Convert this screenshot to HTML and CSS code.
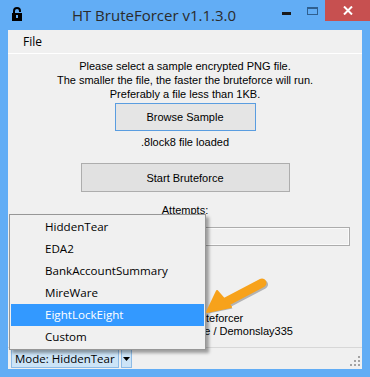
FILE: index.html
```html
<!DOCTYPE html>
<html lang="en">
<head>
    <meta charset="UTF-8">
    <title>HT BruteForcer v1.1.3.0</title>
    <link rel="stylesheet" href="styles.css">
</head>
<body>
    <div class="window">
        <header class="titlebar">
            <svg class="lock" width="10" height="14" viewBox="0 0 10 14">
                <path d="M2 7V4a3 3 0 0 1 6 0v1" fill="none" stroke="#000" stroke-width="2"/>
                <rect x="0" y="6" width="10" height="8" fill="#000"/>
                <rect x="4" y="8" width="2" height="3" fill="#62adf5"/>
            </svg>
            <div class="title">HT BruteForcer v1.1.3.0</div>
            <div class="controls">
                <span class="btn-min"></span>
                <span class="btn-max"></span>
                <span class="btn-close">
                    <svg width="10" height="9" viewBox="0 0 10 9">
                        <path d="M1 0.5L9 8.5M9 0.5L1 8.5" stroke="#fff" stroke-width="2"/>
                    </svg>
                </span>
            </div>
        </header>

        <div class="client">
            <nav class="menubar">
                <span class="menu-item">File</span>
            </nav>

            <main class="content">
                <p class="intro">
                    Please select a sample encrypted PNG file.<br>
                    The smaller the file, the faster the bruteforce will run.<br>
                    Preferably a file less than 1KB.
                </p>
                <button class="button browse">Browse Sample</button>
                <p class="status-text">.8lock8 file loaded</p>
                <button class="button start">Start Bruteforce</button>
                <p class="attempts">Attempts:</p>
                <div class="textbox"></div>

                <p class="about">
                    Hidden Tear Bruteforcer<br>
                    Coded by Michael Gillespie / Demonslay335
                </p>
            </main>

            <footer class="statusbar">
                <span class="mode">Mode: HiddenTear</span>
                <span class="mode-arrow">
                    <svg width="7" height="4" viewBox="0 0 7 4"><path d="M0 0h7L3.5 4z" fill="#000"/></svg>
                </span>
                <span class="grip">
                    <i style="grid-area: 1 / 3"></i>
                    <i style="grid-area: 2 / 2"></i><i style="grid-area: 2 / 3"></i>
                    <i style="grid-area: 3 / 1"></i><i style="grid-area: 3 / 2"></i><i style="grid-area: 3 / 3"></i>
                </span>
            </footer>

            <ul class="dropdown">
                <li>HiddenTear</li>
                <li>EDA2</li>
                <li>BankAccountSummary</li>
                <li>MireWare</li>
                <li class="selected">EightLockEight</li>
                <li>Custom</li>
            </ul>

            <svg class="pointer" width="80" height="50" viewBox="0 0 80 50">
                <g transform="translate(1.5,1.5)" opacity=".25">
                    <path d="M70 10L30 31" stroke="#000" stroke-width="9" stroke-linecap="round"/>
                    <path d="M15 39L25 18L39 34z" fill="#000"/>
                </g>
                <path d="M70 10L30 31" stroke="#f7a21b" stroke-width="9" stroke-linecap="round"/>
                <path d="M15 39L25 18L39 34z" fill="#f7a21b" stroke="#f7a21b" stroke-width="2" stroke-linejoin="round"/>
            </svg>
        </div>
    </div>
</body>
</html>
```

FILE: styles.css
```css
html{
    box-sizing: border-box;
}
*,
*::after,
*::before{
    box-sizing: border-box;
}
body{
    margin: 0;
}

.window{
    width: 370px;
    height: 377px;
    background-color: #62adf5;
    display: flex;
    flex-direction: column;
    padding: 0 8px 8px 8px;
}

.titlebar{
    height: 30px;
    display: flex;
    align-items: flex-start;
    margin: 0 -8px 0 0;
}
.lock{
    margin: 7px 0 0 4px;
}
.title{
    flex: 1;
    text-align: center;
    font-family: "Open Sans", sans-serif;
    font-size: 15px;
    line-height: 30px;
    color: #2b2b2b;
    padding-left: 4px;
}
.controls{
    display: flex;
    align-items: flex-start;
}
.btn-min{
    width: 9px;
    height: 3px;
    background-color: #1a1a1a;
    margin: 12px 16px 0 0;
}
.btn-max{
    width: 11px;
    height: 8px;
    border: 1px solid #2f5f8f;
    border-top-width: 2px;
    margin: 7px 7px 0 0;
}
.btn-close{
    width: 45px;
    height: 21px;
    background-color: #c75050;
    display: flex;
    align-items: center;
    justify-content: center;
}

.client{
    flex: 1;
    position: relative;
    background-color: #f0f0f0;
    display: flex;
    flex-direction: column;
}

.menubar{
    height: 24px;
    border-bottom: 1px solid #fff;
    font-family: "Open Sans", sans-serif;
    font-size: 12px;
    display: flex;
    align-items: center;
}
.menu-item{
    padding: 0 0 0 15px;
    color: #000;
}

.content{
    flex: 1;
    display: flex;
    flex-direction: column;
    align-items: center;
    font-family: "Liberation Sans", Arial, sans-serif;
    font-size: 11px;
    line-height: 14px;
    color: #000;
}
.content p{
    margin: 0;
    text-align: center;
}
.intro{
    padding-top: 5px;
}

.button{
    font-family: "Liberation Sans", Arial, sans-serif;
    font-size: 11px;
    color: #000;
    background-color: #e1e1e1;
    border: 1px solid #adadad;
    padding: 0;
}
.browse{
    width: 141px;
    height: 28px;
    margin-top: 2px;
    border-color: #5a9de0;
    background-color: #e5e5e5;
}
.status-text{
    margin-top: 4px !important;
}
.start{
    width: 209px;
    height: 29px;
    margin-top: 14px;
}
.attempts{
    margin-top: 11px !important;
}
.textbox{
    width: 329px;
    height: 19px;
    margin-top: 10px;
    border: 1px solid #acacac;
    box-shadow: inset 0 0 0 1px #fafafa;
    background-color: #f0f0f0;
}
.about{
    margin-top: auto !important;
    padding-bottom: 9px;
    line-height: 13px;
}

.statusbar{
    height: 22px;
    border-top: 1px solid #d7d7d7;
    display: flex;
    align-items: flex-start;
    padding: 1px 0 0 3px;
    font-family: "Open Sans", sans-serif;
    font-size: 11.5px;
}
.mode{
    height: 19px;
    padding: 0 3px;
    line-height: 17px;
    background-color: #cce4f7;
    border: 1px solid #8dbbe6;
    color: #000;
}
.mode-arrow{
    width: 11px;
    height: 19px;
    margin-left: 2px;
    background-color: #cce4f7;
    border: 1px solid #8dbbe6;
    display: flex;
    align-items: center;
    justify-content: center;
}
.grip{
    margin-left: auto;
    margin-top: 7px;
    margin-right: 2px;
    display: grid;
    grid-template-columns: repeat(3, 2px);
    grid-template-rows: repeat(3, 2px);
    gap: 2px;
}
.grip i{
    background-color: #a3a3a3;
}

.dropdown{
    position: absolute;
    left: 1px;
    top: 184px;
    width: 197px;
    margin: 0;
    padding: 1px;
    list-style: none;
    background-color: #f0f0f0;
    border: 1px solid #979797;
    box-shadow: 3px 3px 3px rgba(0, 0, 0, .35);
    font-family: "Open Sans", sans-serif;
    font-size: 11.6px;
    color: #000;
}
.dropdown li{
    height: 22px;
    line-height: 22px;
    padding-left: 34px;
}
.dropdown li.selected{
    background-color: #3399ff;
    color: #fff;
}

.pointer{
    position: absolute;
    left: 184px;
    top: 243px;
}
```
